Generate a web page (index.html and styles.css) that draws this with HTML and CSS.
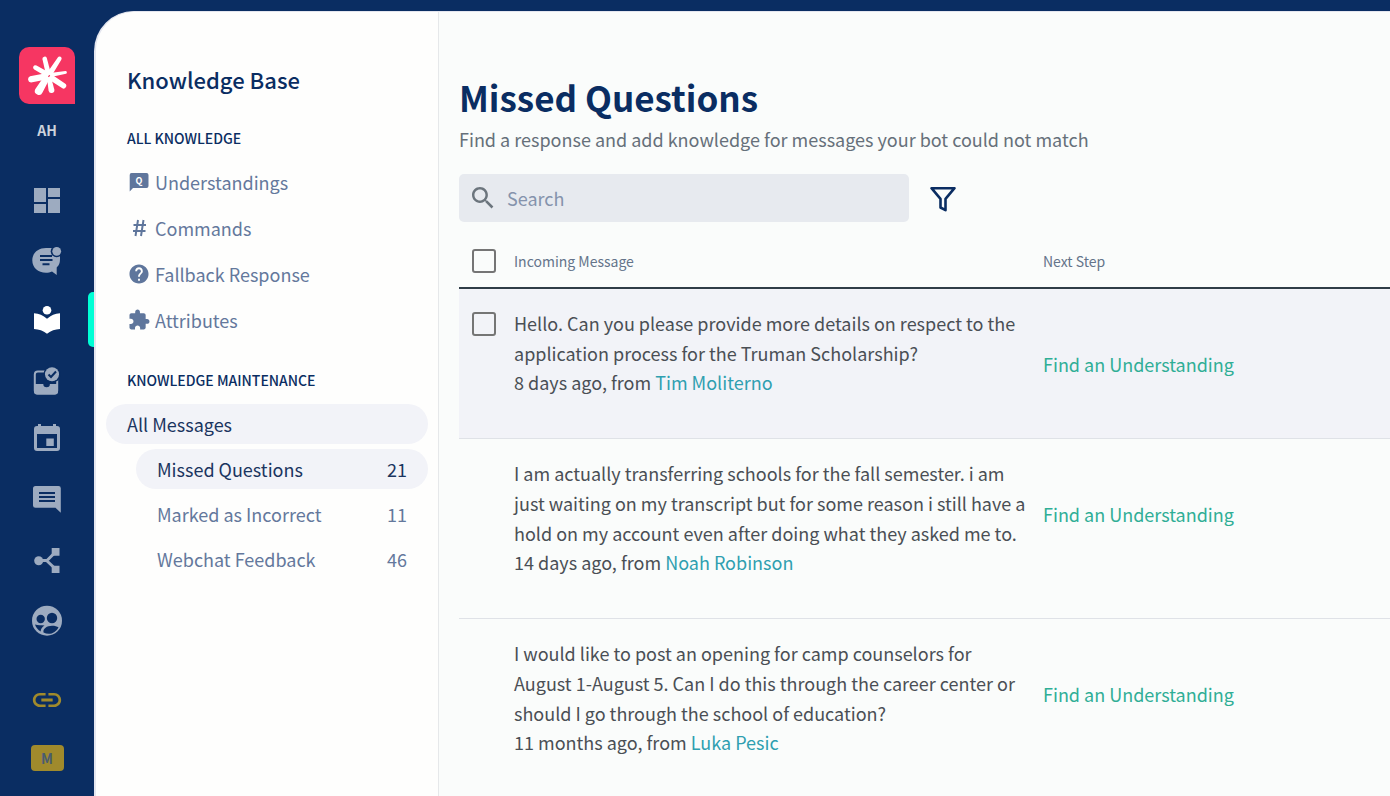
FILE: index.html
```html
<!DOCTYPE html>
<html lang="en">
<head>
    <meta charset="UTF-8">
    <meta name="viewport" content="width=device-width, initial-scale=1.0">
    <title>Missed Questions</title>
    <link rel="stylesheet" href="styles.css">
</head>
<body>
    <div class="app">
        <nav class="sidebar" aria-label="Main">
            <a href="#" class="logo" aria-label="Home">
                <svg viewBox="0 0 56 57" width="56" height="57">
                    <g fill="#fff">
                        <path d="M27.500 30L23.400 12a2.300 2.300 0 0 1 4.400-1L32 27z"/>
                        <path d="M28 26L38.800 10.500a2 2 0 0 1 3.500 2.200L32.500 29z"/>
                        <path d="M31 26L46.500 24a1.400 1.400 0 0 1 .5 2.700L32 30z"/>
                        <path d="M32 27L46 36.500a2.700 2.700 0 0 1-3 4.600L29 32z"/>
                        <path d="M32 30L35.300 42.500a2.900 2.900 0 0 1-5.700 1.300L28 31z"/>
                        <path d="M31 31L23.500 45.500a3.900 3.900 0 0 1-7.300-3.300L26 28z"/>
                        <path d="M30 32L12 35.500a3.300 3.300 0 0 1-1-6.300L28 26z"/>
                        <path d="M28 30L15.200 22.400a2.200 2.200 0 0 1 2.300-3.800L31 26z"/>
                    </g>
                </svg>
            </a>
            <span class="account">AH</span>
            <ul class="menu">
                <li><a href="#" aria-label="Dashboard">
                    <svg class="icon" viewBox="0 0 32 32"><path d="M3 3h12v14H3zM3 19h12v9H3zM17 3h12v9H17zM17 14h12v14H17z"/></svg>
                </a></li>
                <li><a href="#" aria-label="Conversations">
                    <svg class="icon" viewBox="0 0 32 32">
                        <path d="M15 3C7 3 1.300 8 1.300 15.300S7 27.700 15 27.700c2 0 4.300-.5 6-1.300l4.700 3.500v-7.500c2.500-2.400 3.300-4.400 3.300-9V3z"/>
                        <circle class="cut" cx="25.700" cy="6.300" r="6"/>
                        <path class="cut" d="M22 0h10v6H22z"/>
                        <path class="cut-line" d="M9 11h12M9 15h12.500M11.500 19.300h7"/>
                        <circle cx="25.700" cy="6.300" r="4.400"/>
                    </svg>
                </a></li>
                <li class="active"><a href="#" aria-label="Knowledge Base">
                    <svg class="icon" viewBox="0 0 32 32">
                        <circle cx="16" cy="5.300" r="4.300"/>
                        <path d="M3 8.300c5 .3 9 2 13 5.500 4-3.500 8-5.200 13-5.500V24c-5 .2-9 1.700-13 4.800-4-3.100-8-4.600-13-4.800z"/>
                    </svg>
                </a></li>
                <li><a href="#" aria-label="Inbox">
                    <svg class="icon" viewBox="0 0 32 32">
                        <rect class="line" x="3.800" y="6.500" width="22.400" height="22" rx="3"/>
                        <path d="M3 19h9.300a3.300 3.300 0 0 0 6.600 0H27v7.500q0 3-3 3H6q-3 0-3-3z"/>
                        <circle class="cut" cx="21" cy="9.300" r="8.500"/>
                        <circle cx="21" cy="9.300" r="7"/>
                        <path class="cut-line" d="M17.500 9.500l2.500 2.500 5-5.500"/>
                    </svg>
                </a></li>
                <li><a href="#" aria-label="Calendar">
                    <svg class="icon" viewBox="0 0 32 32"><path fill-rule="evenodd" d="M7-1h3v2h12v-2h3v2h1q3 0 3 3v19q0 3-3 3H6q-3 0-3-3V4q0-3 3-3h1zM6 9v14h20V9zM15.300 13.500h7.500V21h-7.500z"/></svg>
                </a></li>
                <li><a href="#" aria-label="Messages">
                    <svg class="icon" viewBox="0 0 32 32">
                        <path d="M4.500 1h23q2.300 0 2.300 2.300v24.500l-5.300-5h-20Q2 22.800 2 20.500v-17Q2 1 4.500 1z"/>
                        <path class="cut-line" d="M8 8h16M8 12h16M8 16h16"/>
                    </svg>
                </a></li>
                <li><a href="#" aria-label="Flows">
                    <svg class="icon" viewBox="0 0 32 32">
                        <circle cx="7.700" cy="15.700" r="4.500"/>
                        <path d="M20.700 3h7.800v7.800h-7.800zM20.700 20.800h7.800v7.200h-7.800z"/>
                        <path class="line-thick" d="M8 15.500h8l7-7M15.500 15.500l8 7.500"/>
                    </svg>
                </a></li>
                <li><a href="#" aria-label="Contacts">
                    <svg class="icon" viewBox="0 0 32 32">
                        <circle cx="16" cy="15.700" r="15"/>
                        <circle class="cut" cx="9.700" cy="14" r="4.200"/>
                        <circle class="cut" cx="21" cy="13" r="5.200"/>
                        <path class="cut" d="M4 19.500c3 1.200 6 .3 9.500 1C11 22 9.700 24 9.700 26.600 7 25 5 22.500 4 19.500zM12.500 27.500c-.8-4 3.500-6.800 8.500-6.800 3 0 5 .6 6.500 1.500-2.500 5.500-9 8.500-15 5.300z"/>
                    </svg>
                </a></li>
            </ul>
            <a href="#" class="link" aria-label="Integrations">
                <svg viewBox="0 0 24 24" width="34" height="34"><path d="M3.900 12c0-1.710 1.390-3.100 3.100-3.100h4V7H7c-2.760 0-5 2.240-5 5s2.240 5 5 5h4v-1.900H7c-1.710 0-3.100-1.390-3.100-3.100zM8 13h8v-2H8v2zm9-6h-4v1.900h4c1.710 0 3.100 1.390 3.100 3.100s-1.390 3.100-3.100 3.100h-4V17h4c2.760 0 5-2.240 5-5s-2.240-5-5-5z"/></svg>
            </a>
            <button type="button" class="user">M</button>
        </nav>

        <div class="workspace">
            <aside class="knowledge">
                <h2>Knowledge Base</h2>
                <h3>All Knowledge</h3>
                <ul class="links topics">
                    <li><a href="#">
                        <svg class="glyph" viewBox="0 0 20 20"><path d="M2.500 1h15q2 0 2 2v11q0 2-2 2H4L.7 19.500V3q0-2 1.800-2z"/><text x="10" y="12">Q</text></svg>
                        Understandings
                    </a></li>
                    <li><a href="#">
                        <svg class="glyph hash" viewBox="0 0 20 20"><path d="M9 2L6.500 18M14.500 2L12 18M4.500 7h12.500M4 13h12.500"/></svg>
                        Commands
                    </a></li>
                    <li><a href="#">
                        <svg class="glyph" viewBox="1.500 1.500 21 21"><path d="M12 2C6.480 2 2 6.480 2 12s4.480 10 10 10 10-4.480 10-10S17.520 2 12 2zm1 17h-2v-2h2v2zm2.070-7.750l-.9.920C13.450 12.900 13 13.500 13 15h-2v-.5c0-1.100.45-2.100 1.170-2.830l1.240-1.260c.37-.36.59-.86.59-1.410 0-1.100-.9-2-2-2s-2 .9-2 2H8c0-2.210 1.790-4 4-4s4 1.790 4 4c0 .88-.36 1.680-.93 2.250z"/></svg>
                        Fallback Response
                    </a></li>
                    <li><a href="#">
                        <svg class="glyph" viewBox="1.500 1.500 21 21"><path d="M20.500 11H19V7c0-1.100-.9-2-2-2h-4V3.500C13 2.120 11.880 1 10.500 1S8 2.120 8 3.500V5H4c-1.100 0-1.990.9-1.990 2v3.800H3.500c1.490 0 2.700 1.210 2.700 2.700s-1.210 2.700-2.700 2.700H2V20c0 1.100.9 2 2 2h3.800v-1.500c0-1.490 1.210-2.700 2.700-2.700 1.490 0 2.700 1.210 2.700 2.700V22H17c1.100 0 2-.9 2-2v-4h1.500c1.380 0 2.500-1.120 2.500-2.500S21.880 11 20.500 11z"/></svg>
                        Attributes
                    </a></li>
                </ul>
                <h3>Knowledge Maintenance</h3>
                <ul class="links">
                    <li><a href="#" class="selected">All Messages</a></li>
                    <li class="sub"><a href="#" class="selected">Missed Questions <span class="count">21</span></a></li>
                    <li class="sub"><a href="#">Marked as Incorrect <span class="count">11</span></a></li>
                    <li class="sub"><a href="#">Webchat Feedback <span class="count">46</span></a></li>
                </ul>
            </aside>

            <main class="content">
                <h1>Missed Questions</h1>
                <p class="intro">Find a response and add knowledge for messages your bot could not match</p>
                <div class="toolbar">
                    <label class="search">
                        <svg viewBox="3 3 18 18" width="22" height="22"><path d="M15.500 14h-.79l-.28-.27C15.410 12.590 16 11.110 16 9.500 16 5.910 13.090 3 9.500 3S3 5.910 3 9.500 5.910 16 9.500 16c1.610 0 3.090-.59 4.230-1.570l.27.28v.79l5 4.990L20.490 19l-4.990-5zm-6 0C7.010 14 5 11.990 5 9.500S7.010 5 9.500 5 14 7.010 14 9.500 11.990 14 9.500 14z"/></svg>
                        <input type="text" placeholder="Search" aria-label="Search">
                    </label>
                    <button type="button" class="filter" aria-label="Filter">
                        <svg viewBox="0 0 28 28" width="28" height="28"><path d="M2.500 4.200h23l-9 10.600v11.400l-5-2.700v-8.700z"/></svg>
                    </button>
                </div>

                <table class="messages">
                    <thead>
                        <tr>
                            <th class="check"><input type="checkbox" aria-label="Select all messages"></th>
                            <th class="message">Incoming Message</th>
                            <th>Next Step</th>
                        </tr>
                    </thead>
                    <tbody>
                        <tr class="hovered">
                            <td class="check"><input type="checkbox" aria-label="Select message from Tim Moliterno"></td>
                            <td class="message">
                                <p>Hello. Can you please provide more details on respect to the application process for the Truman Scholarship?</p>
                                <p class="meta">8 days ago, from <a href="#" class="sender">Tim Moliterno</a></p>
                            </td>
                            <td class="next"><a href="#" class="find">Find an Understanding</a></td>
                        </tr>
                        <tr>
                            <td class="check"></td>
                            <td class="message">
                                <p>I am actually transferring schools for the fall semester. i am just waiting on my transcript but for some reason i still have a hold on my account even after doing what they asked me to.</p>
                                <p class="meta">14 days ago, from <a href="#" class="sender">Noah Robinson</a></p>
                            </td>
                            <td class="next"><a href="#" class="find">Find an Understanding</a></td>
                        </tr>
                        <tr>
                            <td class="check"></td>
                            <td class="message">
                                <p>I would like to post an opening for camp counselors for August 1-August 5. Can I do this through the career center or should I go through the school of education?</p>
                                <p class="meta">11 months ago, from <a href="#" class="sender">Luka Pesic</a></p>
                            </td>
                            <td class="next"><a href="#" class="find">Find an Understanding</a></td>
                        </tr>
                    </tbody>
                </table>
            </main>
        </div>
    </div>
</body>
</html>
```
FILE: styles.css
```css
* {
    box-sizing: border-box;
}

body {
    margin: 0;
    font-family: "Noto Sans CJK SC", "Noto Sans", sans-serif;
    font-size: 18px;
    line-height: 30px;
    color: #4a4f55;
    background-color: #0a2d62;
}

h1, h2, h3, p, ul {
    margin: 0;
    padding: 0;
}

ul {
    list-style: none;
}

a {
    text-decoration: none;
}

svg {
    display: block;
    overflow: visible;
}

.app {
    display: flex;
    height: 100vh;
    overflow: hidden;
}

/* left icon bar */
.sidebar {
    flex: 0 0 94px;
    display: flex;
    flex-direction: column;
    align-items: center;
    padding-top: 47px;
}

.logo {
    background-color: #f63662;
    border-radius: 10px 10px 0 10px;
}

.account {
    margin-top: 11px;
    font-size: 14px;
    font-weight: bold;
    color: #ccd3dd;
}

.menu {
    width: 100%;
    margin-top: 26px;
}

.menu li {
    height: 60px;
    display: flex;
    align-items: center;
    justify-content: center;
    position: relative;
}

.menu .active::after {
    content: "";
    position: absolute;
    right: 0;
    top: 1px;
    width: 6px;
    height: 55px;
    background-color: #00ffd5;
    border-radius: 5px 0 0 5px;
}

.icon {
    width: 32px;
    height: 32px;
    fill: #9dabc0;
}

.active .icon {
    fill: #fff;
}

.icon .cut {
    fill: #0a2d62;
}

.icon .cut-line {
    fill: none;
    stroke: #0a2d62;
    stroke-width: 2;
}

.icon .line {
    fill: none;
    stroke: #9dabc0;
    stroke-width: 2;
}

.icon .line-thick {
    fill: none;
    stroke: #9dabc0;
    stroke-width: 3;
}

.link {
    margin-top: 32px;
    fill: #a08a2c;
}

.user {
    width: 33px;
    height: 26px;
    margin-top: 28px;
    padding: 0;
    border: none;
    border-radius: 4px;
    background-color: #a08a2c;
    color: #4a5c70;
    font-family: inherit;
    font-size: 14px;
    font-weight: bold;
    line-height: 26px;
}

.workspace {
    flex: 1;
    display: flex;
    min-width: 0;
    margin-top: 11px;
    border-left: 2px solid #e4e6ef;
    border-top: 1px solid #e4e6ef;
    border-top-left-radius: 40px;
    background-color: #fafcfb;
    overflow: hidden;
}

/* knowledge panel */
.knowledge {
    flex: 0 0 343px;
    padding: 52px 10px 0;
    border-right: 1px solid #e6e8ea;
    background-color: #fefefd;
    color: #0a2d62;
}

.knowledge h2 {
    padding-left: 21px;
    margin-bottom: 34px;
    font-size: 22px;
    font-weight: 500;
    line-height: 30px;
}

.knowledge h3 {
    padding-left: 21px;
    margin: 30px 0 14px;
    font-size: 14px;
    font-weight: 500;
    line-height: 20px;
    text-transform: uppercase;
}

.links {
    display: flex;
    flex-direction: column;
    gap: 5px;
}

.topics {
    gap: 6px;
}

.links a {
    display: flex;
    align-items: center;
    gap: 6px;
    height: 40px;
    padding: 0 21px;
    border-radius: 20px;
    color: #64789c;
}

.links .selected {
    background-color: #f2f3f8;
    color: #1b3560;
}

.links .sub {
    padding-left: 30px;
}

.count {
    margin-left: auto;
}

.glyph {
    width: 20px;
    height: 20px;
    margin-left: 2px;
    fill: #5f769c;
}

.glyph text {
    fill: #fff;
    font-size: 9px;
    font-weight: bold;
    text-anchor: middle;
}

.hash {
    fill: none;
    stroke: #5f769c;
    stroke-width: 2;
}

/* missed questions */
.content {
    flex: 1;
    min-width: 0;
    padding: 60px 0 0 20px;
}

.content h1 {
    font-size: 35px;
    line-height: 50px;
    color: #0a2d62;
}

.intro {
    margin-top: 2px;
    color: #66707a;
}

.toolbar {
    display: flex;
    align-items: center;
    gap: 20px;
    margin-top: 20px;
}

.search {
    display: flex;
    align-items: center;
    gap: 13px;
    width: 450px;
    height: 48px;
    padding: 0 13px;
    border-radius: 5px;
    background-color: #e7eaef;
    fill: #6c757d;
}

.search input {
    flex: 1;
    min-width: 0;
    padding: 0;
    border: none;
    outline: none;
    background: none;
    font-family: inherit;
    font-size: 18px;
    color: #4a4f55;
}

.search input::placeholder {
    color: #8593ac;
}

.filter {
    padding: 0;
    border: none;
    background: none;
    fill: none;
    stroke: #0a2d62;
    stroke-width: 2.6;
    stroke-linejoin: round;
}

.messages {
    width: 100%;
    margin-top: 13px;
    border-collapse: separate;
    border-spacing: 0;
    table-layout: fixed;
}

.messages th {
    height: 54px;
    padding: 0;
    border-bottom: 2px solid #2f3d47;
    font-size: 14px;
    font-weight: normal;
    text-align: left;
    color: #64748a;
}

.messages td {
    padding: 0;
    border-bottom: 1px solid #dfe2e7;
    vertical-align: top;
}

.messages .check {
    width: 55px;
    padding-left: 13px;
}

.messages td.check {
    padding-top: 23px;
}

.messages .message {
    width: 529px;
    padding-right: 14px;
}

.messages td.message {
    padding-top: 19px;
    padding-bottom: 41px;
}

.messages td.next {
    padding-top: 60px;
}

.meta {
    line-height: 29px;
}

.messages .hovered {
    background-color: #f2f3f8;
}

.messages input {
    display: block;
    appearance: none;
    width: 24px;
    height: 24px;
    margin: 0;
    border: 2px solid #757575;
    border-radius: 3px;
}

.sender {
    color: #2f9fb0;
}

.find {
    color: #2fae96;
}
```
